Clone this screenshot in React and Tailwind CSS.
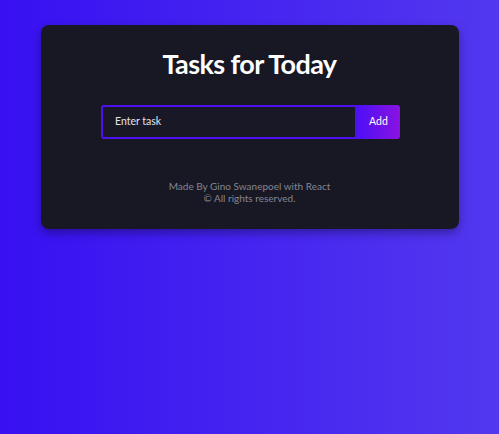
export default function App() {
  return (
    <div
      className="min-h-[434px] w-full bg-[linear-gradient(to_right,#3810f2,#5238ef)] pt-[25px]"
      style={{ fontFamily: '"Lato", "Noto Sans", sans-serif' }}
    >
      <div className="mx-auto flex h-[204px] w-[418px] flex-col items-center rounded-lg bg-[#181824] shadow-[0_4px_10px_rgba(0,0,0,0.35)]">
        <h1 className="mt-[23px] text-[27px] font-bold leading-[32px] tracking-[-0.6px] text-white">Tasks for Today</h1>
        <div className="ml-[2px] mt-[25px] flex h-[34px] w-[299px]">
          <div className="flex flex-1 items-center rounded-l-[3px] border-2 border-[#4f10f0] bg-[#181826] pl-[12px] text-[10.5px] text-[#e4e4ea]">
            Enter task
          </div>
          <button className="w-[43px] shrink-0 rounded-r-[3px] bg-[linear-gradient(to_right,#4c10f5,#8a12e2)] text-[10.5px] text-white">
            Add
          </button>
        </div>
        <div className="mt-[41px] text-center text-[10px] leading-[12px] text-[#85858f]">
          <p>Made By Gino Swanepoel with React</p>
          <p>© All rights reserved.</p>
        </div>
      </div>
    </div>
  );
}
